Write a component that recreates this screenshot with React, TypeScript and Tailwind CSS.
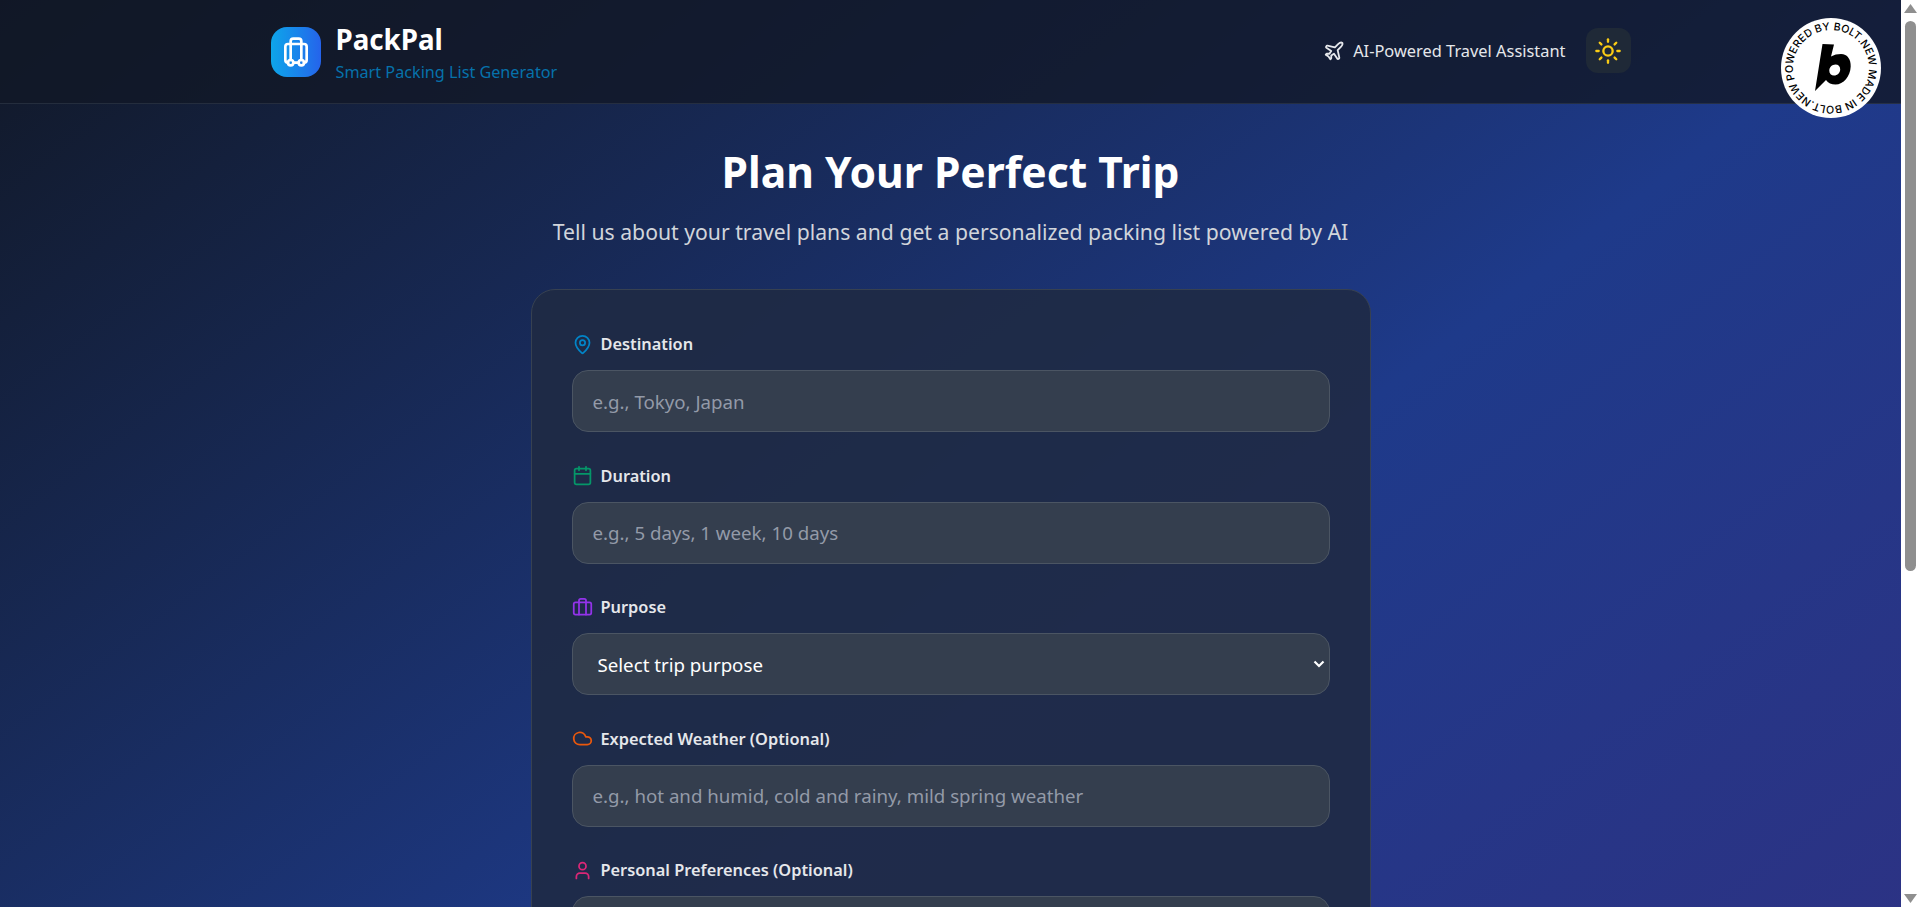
import { Briefcase, Calendar, Cloud, Luggage, MapPin, Plane, Sun, User } from "lucide-react";

const BoltBadge = () => {
  return (
    <svg viewBox="0 0 100 100" className="absolute right-[20px] top-[18px] h-[100px] w-[100px]">
      <circle cx="50" cy="50" r="50" fill="#fff" />
      <defs>
        <path id="badge-ring" d="M50 50m-38 0a38 38 0 1 1 76 0a38 38 0 1 1 -76 0" />
      </defs>
      <text
        fill="#000"
        fontFamily="Inter, sans-serif"
        fontSize="10.6"
        fontWeight="500"
        textLength="236"
        transform="rotate(-18 50 50)"
      >
        <textPath href="#badge-ring">POWERED BY BOLT.NEW MADE IN BOLT.NEW</textPath>
      </text>
      <path
        fill="#000"
        fillRule="evenodd"
        d="M41.500 26L53 26.500L50 38.500C53 36.800 56.500 36 60 36C66.500 36 70 41.500 69.700 48.500C69.300 58.500 62.500 66.500 54.500 66.500C50.500 66.500 47 65 45 62L34 73ZM54.500 46.500C51 46.500 48.300 49.300 48.300 52.800C48.300 55.800 50.300 57.500 53 57.500C56.500 57.500 59.200 54.700 59.200 51.200C59.200 48.200 57.200 46.500 54.500 46.500Z"
      />
    </svg>
  );
};

// the window's scrollbar, which the headless browser does not paint
const Scrollbar = () => {
  return (
    <div className="fixed right-0 top-0 flex h-screen w-[19px] flex-col items-center bg-white">
      <svg viewBox="0 0 13 9" className="mt-[4px] h-[9px] w-[13px]">
        <path fill="#8f8f8f" d="M6.500 0L13 9H0z" />
      </svg>
      <div className="mt-[8px] h-[550px] w-[11px] rounded-full bg-[#8f8f8f]" />
      <svg viewBox="0 0 13 9" className="absolute bottom-[4px] h-[9px] w-[13px]">
        <path fill="#8f8f8f" d="M0 0H13L6.500 9z" />
      </svg>
    </div>
  );
};

const fieldLabel = "mb-[14px] flex items-center gap-2 text-[16.35px] font-semibold leading-6 text-[#e5e7eb]";
const fieldBox =
  "h-[62px] w-full rounded-2xl border border-[#4b5563] bg-[#343e4e] px-5 text-[18.7px] text-white outline-none placeholder:text-[#939aa8]";

const App = () => {
  return (
    <div className="bg-white">
      <div className="min-h-[1433px] w-[1901px] bg-gradient-to-br from-[#111827] via-[#1e3a8a] to-[#312e81] font-['Noto_Sans',sans-serif]">
        <header className="relative border-b border-[#374151]/50 bg-[#111827]/80">
          <div className="mx-auto flex h-[103px] w-[1360px] items-center justify-between">
            <div className="flex items-center gap-[15px]">
              <div className="flex h-[50px] w-[50px] items-center justify-center rounded-2xl bg-gradient-to-r from-[#0ea5e9] to-[#2563eb]">
                <Luggage className="h-8 w-8 text-white" />
              </div>
              <div className="pt-[2px]">
                <h1 className="text-[27.7px] font-bold leading-9 text-white">PackPal</h1>
                <p className="mt-[3px] text-[16.2px] leading-6 text-[#0672ab]">Smart Packing List Generator</p>
              </div>
            </div>
            <div className="flex items-center gap-5">
              <div className="flex items-center gap-2 text-[#e5e7eb]">
                <Plane className="h-[22px] w-[22px]" />
                <span className="text-[16.4px]">AI-Powered Travel Assistant</span>
              </div>
              <button className="mb-[2px] flex h-[45px] w-[45px] items-center justify-center rounded-xl bg-[#1f2937]">
                <Sun className="h-7 w-7 text-[#facc15]" />
              </button>
            </div>
          </div>
          <BoltBadge />
        </header>

        <main className="mx-auto w-[840px] pt-[39px]">
          <div className="mb-[43px] text-center">
            <h2 className="mb-[19px] text-[42.6px] font-bold leading-[56px] text-white">Plan Your Perfect Trip</h2>
            <p className="whitespace-nowrap text-[21.2px] leading-7 text-[#d1d5db]">
              Tell us about your travel plans and get a personalized packing list powered by AI
            </p>
          </div>

          <form className="flex flex-col gap-[31.6px] rounded-3xl border border-[#374151] bg-[#1f2a44]/90 px-10 pt-[42px] pb-10">
            <div>
              <label className={fieldLabel}>
                <MapPin className="h-[21px] w-[21px] text-[#0284c7]" />
                Destination
              </label>
              <input className={fieldBox} placeholder="e.g., Tokyo, Japan" />
            </div>
            <div>
              <label className={fieldLabel}>
                <Calendar className="h-[21px] w-[21px] text-[#059669]" />
                Duration
              </label>
              <input className={fieldBox} placeholder="e.g., 5 days, 1 week, 10 days" />
            </div>
            <div>
              <label className={fieldLabel}>
                <Briefcase className="h-[21px] w-[21px] text-[#9333ea]" />
                Purpose
              </label>
              <div className="relative">
                <select className={`${fieldBox} appearance-none pl-[25px] pt-[2px]`}>
                  <option>Select trip purpose</option>
                </select>
                <svg viewBox="0 0 12 8" className="pointer-events-none absolute right-[5px] top-[27px] h-2 w-3">
                  <path d="M1.500 1.500L6 6L10.500 1.500" fill="none" stroke="#fff" strokeWidth="2.200" />
                </svg>
              </div>
            </div>
            <div>
              <label className={fieldLabel}>
                <Cloud className="h-[21px] w-[21px] text-[#ea580c]" />
                Expected Weather (Optional)
              </label>
              <input className={fieldBox} placeholder="e.g., hot and humid, cold and rainy, mild spring weather" />
            </div>
            <div>
              <label className={fieldLabel}>
                <User className="h-[21px] w-[21px] text-[#db2777]" />
                Personal Preferences (Optional)
              </label>
              <textarea className={`${fieldBox} h-[120px] py-4`} placeholder="e.g., vegetarian, photography gear" />
            </div>
            <button type="button" className="h-[60px] rounded-2xl bg-gradient-to-r from-[#0ea5e9] to-[#2563eb] text-[18px] font-semibold text-white">
              Generate Packing List
            </button>
          </form>
        </main>
      </div>
      <Scrollbar />
    </div>
  );
};

export default App;
